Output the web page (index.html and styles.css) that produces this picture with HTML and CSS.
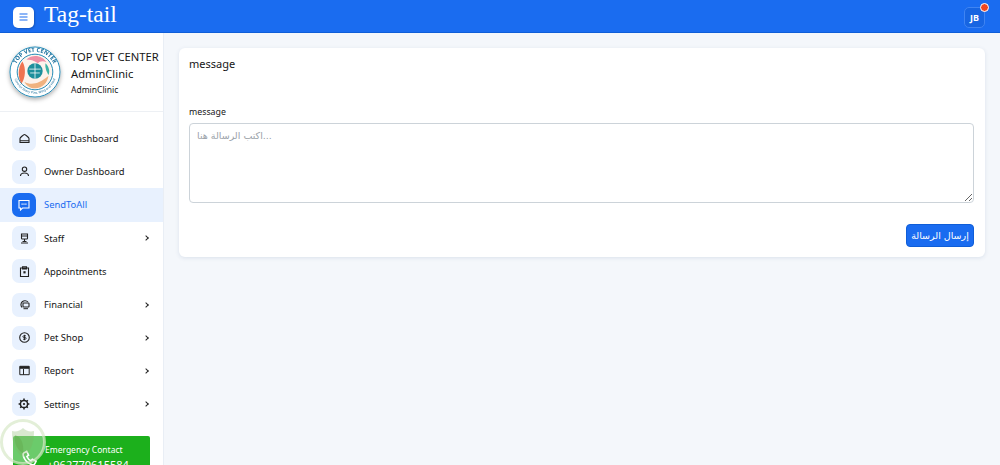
FILE: index.html
```html
<!DOCTYPE html>
<html lang="en">
<head>
  <meta charset="UTF-8">
  <meta name="viewport" content="width=device-width, initial-scale=1.0">
  <title>Tag-tail</title>
  <link rel="stylesheet" href="styles.css">
</head>
<body>
  <header class="topbar">
    <button class="menu-btn">
      <svg width="9" height="8" viewBox="0 0 9 8"><path d="M.5 1h8M.5 4h8M.5 7h8" stroke="#1a6cf0" stroke-width="1.100" fill="none"/></svg>
    </button>
    <span class="brand">Tag-tail</span>
    <div class="avatar">JB<span class="dot"></span></div>
  </header>

  <div class="wrapper">
    <aside class="sidebar">
      <div class="profile">
        <svg class="logo" width="52" height="52" viewBox="0 0 54 54">
          <defs><path id="ring" d="M6 27a21 21 0 1 1 42 0"/><path id="ringlow" d="M4.500 27a22.500 22.500 0 0 0 45 0"/></defs>
          <circle cx="27" cy="27" r="26.500" fill="#fff"/>
          <circle cx="27" cy="27" r="26" fill="none" stroke="#1c86b4" stroke-width="1"/>
          <text class="logo-text"><textPath href="#ring" startOffset="50%" text-anchor="middle">TOP VET CENTER</textPath></text>
          <text class="logo-small"><textPath href="#ringlow" startOffset="50%" text-anchor="middle">Care for Every Paw, Wing and Hoof</textPath></text>
          <circle cx="27" cy="27" r="18.500" fill="#fdf3ec" stroke="#1c86b4" stroke-width="1"/>
          <path d="M14 16c-5 6-5 17-1 23 4-6 5-16 1-23z" fill="#ef7350"/>
          <path d="M18 14c7-6 17-4 21 3-4-2-7-1-9 1-4-3-8-4-12-4z" fill="#ee8fa5"/>
          <circle cx="27" cy="26" r="8" fill="#1d8f9c"/>
          <path d="M27 18v16M21 24h12M22 28h10" stroke="#fff" stroke-width=".800"/>
          <path d="M16 37c6 4 15 3 25-6-1 7-6 13-14 13-5 0-9-3-11-7z" fill="#f0b27f"/>
          <path d="M38 18c3 3 5 8 3 12-2-3-4-8-3-12z" fill="#3bb3a5"/>
        </svg>
        <div class="profile-text">
          <div class="clinic">TOP VET CENTER</div>
          <div class="clinic">AdminClinic</div>
          <div class="role">AdminClinic</div>
        </div>
      </div>

      <nav class="nav">
        <a class="nav-item">
          <span class="nav-icon"><svg width="11" height="11" viewBox="0 0 11 11"><path d="M1 9.500V5.500C1 4.800 4.500 1.500 5.500 1.500S10 4.800 10 5.500v4zM1 7.800h9" fill="none" stroke="#222" stroke-width="1.100"/></svg></span>
          <span class="nav-label">Clinic Dashboard</span>
        </a>
        <a class="nav-item">
          <span class="nav-icon"><svg width="11" height="11" viewBox="0 0 11 11"><circle cx="5.500" cy="3.200" r="2.200" fill="none" stroke="#222" stroke-width="1.100"/><path d="M1.500 10c0-2.200 1.800-3 4-3s4 .8 4 3" fill="none" stroke="#222" stroke-width="1.100"/></svg></span>
          <span class="nav-label">Owner Dashboard</span>
        </a>
        <a class="nav-item active">
          <span class="nav-icon"><svg width="12" height="12" viewBox="0 0 12 12"><path d="M1 1.500h10v7.500H4.500L2.500 11V9H1z" fill="none" stroke="#fff" stroke-width="1.100"/><path d="M3.500 5.200h5" stroke="#fff" stroke-width="1.200" stroke-dasharray="1.200 .7"/></svg></span>
          <span class="nav-label">SendToAll</span>
        </a>
        <a class="nav-item">
          <span class="nav-icon"><svg width="11" height="11" viewBox="0 0 11 11"><path d="M2.500 1h6v4.200q0 .8-.8.8H3.300q-.8 0-.8-.8zM2.500 3h6M5.500 6v2.500M2 10h7M3.500 8.500h4" fill="none" stroke="#222" stroke-width="1.100"/></svg></span>
          <span class="nav-label">Staff</span>
          <span class="chev"></span>
        </a>
        <a class="nav-item">
          <span class="nav-icon"><svg width="11" height="11" viewBox="0 0 11 11"><path d="M1.500 2h8v8.500h-8zM3.500 .7h4V3h-4z" fill="none" stroke="#222" stroke-width="1.100"/><rect x="4.400" y="5.200" width="2.200" height="2.200" fill="#222"/></svg></span>
          <span class="nav-label">Appointments</span>
        </a>
        <a class="nav-item">
          <span class="nav-icon"><svg width="11" height="11" viewBox="0 0 11 11"><path d="M9 3A4 4 0 1 0 3 8.500" fill="none" stroke="#222" stroke-width="1.100"/><rect x="4" y="4" width="6" height="4" rx=".5" fill="none" stroke="#222" stroke-width="1.100"/><path d="M4.500 9.700h4.500" stroke="#222" stroke-width="1"/></svg></span>
          <span class="nav-label">Financial</span>
          <span class="chev"></span>
        </a>
        <a class="nav-item">
          <span class="nav-icon"><svg width="11" height="11" viewBox="0 0 11 11"><circle cx="5.500" cy="5.500" r="4.800" fill="none" stroke="#222" stroke-width="1.100"/><path d="M7 3.800H4.700q-.8 0-.8.8t.8.900h1.600q.8 0 .8.900t-.8.800H4M5.500 2.800v5.400" fill="none" stroke="#222" stroke-width=".900"/></svg></span>
          <span class="nav-label">Pet Shop</span>
          <span class="chev"></span>
        </a>
        <a class="nav-item">
          <span class="nav-icon"><svg width="11" height="11" viewBox="0 0 11 11"><path d="M.8 1.300h9.400v8.400H.8zM4.500 4v5.700" fill="none" stroke="#222" stroke-width="1"/><rect x=".8" y="1.300" width="9.400" height="2.500" fill="#222"/></svg></span>
          <span class="nav-label">Report</span>
          <span class="chev"></span>
        </a>
        <a class="nav-item">
          <span class="nav-icon"><svg width="12" height="12" viewBox="0 0 12 12"><circle cx="6" cy="6" r="3.600" fill="none" stroke="#222" stroke-width="1.500"/><path d="M6 .6v2M6 9.400v2M.6 6h2M9.400 6h2M2.200 2.200l1.400 1.400M8.400 8.400l1.400 1.400M2.200 9.800l1.400-1.400M8.400 3.600l1.400-1.400" stroke="#222" stroke-width="1.500"/><circle cx="6" cy="6" r="1.100" fill="#222"/></svg></span>
          <span class="nav-label">Settings</span>
          <span class="chev"></span>
        </a>
      </nav>

      <div class="emergency">
        <svg width="16" height="17" viewBox="0 0 17 17"><path d="M2 2.500L5 1l2 4-1.800 1.300c.8 2 2.500 3.800 4.500 4.700L11 9.300l4 2-1.500 3c-.5 1-1.500 1.200-3 .7C6 13.500 3 10.500 1.500 6 1 4.500 1 3.300 2 2.500z" fill="none" stroke="#fff" stroke-width="1.700"/></svg>
        <div class="emergency-text">
          <div>Emergency Contact</div>
          <div class="phone">+962770615584</div>
        </div>
      </div>
    </aside>

    <main class="content">
      <section class="card">
        <h2 class="card-title">message</h2>
        <label class="field-label" for="msg">message</label>
        <textarea id="msg" class="field" placeholder="اكتب الرسالة هنا..."></textarea>
        <div class="actions">
          <button class="send-btn">إرسال الرسالة</button>
        </div>
      </section>
    </main>
  </div>

  <div class="watermark">
    <svg width="46" height="46" viewBox="0 0 46 46">
      <circle cx="23" cy="23" r="21.500" fill="rgba(255,255,255,.35)" stroke="rgba(215,232,200,.7)" stroke-width="3"/>
      <path d="M12 12c4 1 8 0 11-3 3 3 7 4 11 3 0 12-3 21-11 26-8-5-11-14-11-26z" fill="rgba(125,180,95,.3)"/>
      <path d="M15 16c6 2 9 8 8 18-6-3-9-10-8-18z" fill="rgba(95,160,70,.35)"/>
    </svg>
  </div>
</body>
</html>
```

FILE: styles.css
```css
* {
  box-sizing: border-box;
}
html, body {
  height: 100%;
}
body {
  margin: 0;
  overflow: hidden;
  display: flex;
  flex-direction: column;
  background: #f4f7fb;
  color: #161616;
  font-family: "Noto Sans", "DejaVu Sans", sans-serif;
}
.topbar {
  height: 33px;
  flex: none;
  display: flex;
  align-items: center;
  padding: 0 15px 0 13px;
  background: #1a6cf0;
  border-bottom: 1px solid #0f5ed8;
}
.menu-btn {
  width: 21px;
  height: 21px;
  padding: 0;
  margin-top: 2px;
  display: flex;
  align-items: center;
  justify-content: center;
  border: none;
  border-radius: 5px;
  background: #fff;
  box-shadow: 1px 1px 2px rgba(0, 0, 0, .2);
}
.brand {
  margin-left: 10px;
  margin-top: -4px;
  font-family: "Liberation Serif", serif;
  font-size: 23.500px;
  line-height: 28px;
  color: #fff;
}
.avatar {
  position: relative;
  width: 21px;
  height: 21px;
  margin-left: auto;
  margin-top: 3px;
  display: flex;
  align-items: center;
  justify-content: center;
  border: 1px solid #3f84f2;
  border-radius: 5px;
  background: #1765e2;
  font-size: 9px;
  font-weight: 700;
  color: #fff;
}
.dot {
  position: absolute;
  top: -5px;
  right: -5px;
  width: 9px;
  height: 9px;
  border-radius: 50%;
  border: 1.500px solid #fff;
  background: #f0451f;
}
.wrapper {
  flex: 1;
  display: flex;
  min-height: 0;
}
.sidebar {
  width: 164px;
  flex: none;
  display: flex;
  flex-direction: column;
  background: #fff;
  border-right: 1px solid #e9eef5;
  overflow: hidden;
}
.profile {
  height: 79px;
  flex: none;
  display: flex;
  align-items: center;
  gap: 10px;
  padding-left: 9px;
  border-bottom: 1px solid #edf0f4;
}
.logo {
  flex: none;
  filter: drop-shadow(0 2px 2px rgba(0, 0, 0, .3));
}
.logo-text {
  font-size: 6px;
  font-weight: 700;
  fill: #1c6f9c;
}
.logo-small {
  font-size: 3.400px;
  fill: #1c6f9c;
}
.profile-text {
  white-space: nowrap;
}
.clinic {
  font-size: 11.200px;
  line-height: 17px;
}
.role {
  font-size: 8.500px;
  line-height: 15px;
}
.nav {
  padding-top: 10px;
  flex: none;
}
.nav-item {
  height: 33.200px;
  display: flex;
  align-items: center;
  padding: 0 12px;
  font-size: 9.400px;
}
.nav-icon {
  width: 24px;
  height: 24px;
  flex: none;
  margin-right: 8px;
  display: flex;
  align-items: center;
  justify-content: center;
  border-radius: 7px;
  background: #e8f1fe;
}
.nav-label {
  flex: 1;
}
.chev {
  width: 4px;
  height: 4px;
  margin-right: 3px;
  border-top: 1.200px solid #222;
  border-right: 1.200px solid #222;
  transform: rotate(45deg);
}
.active {
  background: #e8f1fe;
  color: #1a6cf0;
}
.active .nav-icon {
  background: #1a6cf0;
}
.emergency {
  margin: 15px 13px 0;
  height: 50px;
  flex: none;
  display: flex;
  gap: 7px;
  padding: 6px 9px 0;
  border-radius: 2px;
  background: #1cb01c;
  color: #fff;
  font-size: 8.500px;
}
.emergency svg {
  margin-top: 8px;
  flex: none;
}
.emergency-text {
  line-height: 15px;
  white-space: nowrap;
}
.phone {
  padding-left: 2px;
  font-size: 11px;
}
.content {
  flex: 1;
  padding: 15px 15px 0;
  min-width: 0;
}
.card {
  height: 209px;
  padding: 7px 11px 0 10px;
  background: #fff;
  border-radius: 6px;
  box-shadow: 0 1px 4px rgba(40, 70, 120, .12);
}
.card-title {
  margin: 0;
  font-size: 11px;
  font-weight: 400;
  line-height: 17px;
}
.field-label {
  display: block;
  margin-top: 33px;
  font-size: 8.800px;
  line-height: 14px;
}
.field {
  display: block;
  width: 100%;
  height: 80px;
  margin-top: 4px;
  padding: 6px 7px;
  border: 1px solid #ccd3d9;
  border-radius: 4px;
  background: #fff;
  font-family: "DejaVu Sans", sans-serif;
  font-size: 9.500px;
  resize: vertical;
  outline: none;
}
.field::placeholder {
  color: #9aa1a8;
}
.actions {
  display: flex;
  justify-content: flex-end;
  margin-top: 21px;
}
.send-btn {
  width: 68px;
  height: 23px;
  padding: 0;
  border: 1px solid #0f5ed8;
  border-radius: 4px;
  background: #1a6cf0;
  color: #fff;
  font-family: "DejaVu Sans", sans-serif;
  font-size: 9.500px;
}
.watermark {
  position: absolute;
  left: 0;
  bottom: 0;
  width: 46px;
  height: 46px;
}
```
